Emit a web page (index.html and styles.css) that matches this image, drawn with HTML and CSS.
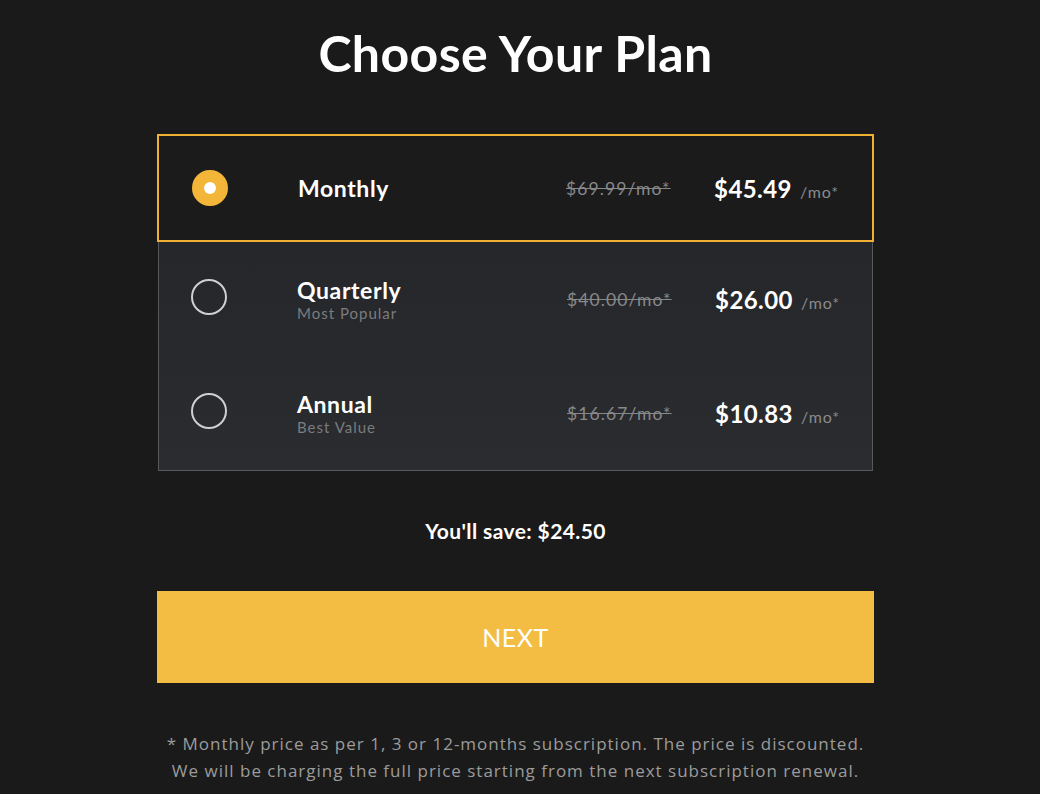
FILE: index.html
```html
<!DOCTYPE html>
<html lang="en">
<head>
    <meta charset="UTF-8">
    <meta name="viewport" content="width=device-width, initial-scale=1.0">
    <title>Choose Your Plan</title>
    <link rel="stylesheet" href="styles.css">
</head>
<body>

    <div class="page">
        <h1>Choose Your Plan</h1>

        <div class="plans">
            <label class="plan selected">
                <span class="radio"></span>
                <span class="plan-name">Monthly</span>
                <span class="old-price">$69.99/mo*</span>
                <span class="price">$45.49 <small>/mo*</small></span>
            </label>

            <label class="plan">
                <span class="radio"></span>
                <span class="plan-name">Quarterly<em>Most Popular</em></span>
                <span class="old-price">$40.00/mo*</span>
                <span class="price">$26.00 <small>/mo*</small></span>
            </label>

            <label class="plan">
                <span class="radio"></span>
                <span class="plan-name">Annual<em>Best Value</em></span>
                <span class="old-price">$16.67/mo*</span>
                <span class="price">$10.83 <small>/mo*</small></span>
            </label>
        </div>

        <p class="save">You'll save: $24.50</p>

        <button class="next-btn">NEXT</button>

        <p class="note">* Monthly price as per 1, 3 or 12-months subscription. The price is discounted.<br>
        We will be charging the full price starting from the next subscription renewal.</p>
    </div>

</body>
</html>
```

FILE: styles.css
```css
body {
    margin: 0;
    background: #1a1a1a;
    color: #fff;
    font-family: 'Lato', sans-serif;
}
.page {
    width: 717px;
    margin-left: 157px;
    padding-top: 22px;
}
h1 {
    margin: 0;
    text-align: center;
    font-size: 50px;
    font-weight: 700;
    line-height: 62px;
    letter-spacing: 0.4px;
}
.plans {
    margin-top: 50px;
    background: linear-gradient(180deg, #232427, #2a2c30);
    border: 1px solid #58595c;
    border-top: none;
    margin-left: 1px;
    margin-right: 1px;
}
.plan {
    display: flex;
    align-items: center;
    height: 114px;
    padding: 0 32px;
    box-sizing: border-box;
    cursor: pointer;
}
.plan.selected {
    height: 108px;
    background: #1b1b1b;
    border: 2px solid #f0b132;
    margin: 0 -2px;
    padding: 0 33px;
}
.radio {
    width: 32px;
    height: 32px;
    border: 2px solid #cfcfcf;
    border-radius: 50%;
    flex-shrink: 0;
    margin-top: -4px;
}
.selected .radio {
    background: #f3b638;
    border-color: #f3b638;
    position: relative;
    margin-top: 0;
}
.selected .radio::after {
    content: '';
    position: absolute;
    left: 10px;
    top: 10px;
    width: 12px;
    height: 12px;
    border-radius: 50%;
    background: #fff;
}
.plan-name {
    flex: 1;
    margin-left: 70px;
    font-size: 23px;
    font-weight: 700;
    letter-spacing: 0.6px;
    line-height: 28px;
}
.plan-name em {
    display: block;
    font-style: normal;
    font-weight: 400;
    font-size: 15px;
    line-height: 18px;
    color: #7b7c7f;
    letter-spacing: 1px;
}
.old-price {
    width: 110px;
    font-size: 17.5px;
    color: #87888a;
    text-decoration: line-through;
    letter-spacing: 1.1px;
}
.price {
    width: 133px;
    margin-left: 30px;
    text-align: right;
    font-size: 24px;
    font-weight: 700;
    letter-spacing: 0.4px;
}
.price small {
    font-size: 16px;
    font-weight: 400;
    color: #8a8b8d;
    margin-left: 2px;
    letter-spacing: 0.9px;
}
.save {
    margin: 48px 0 0;
    text-align: center;
    font-size: 21px;
    font-weight: 700;
    line-height: 24px;
    letter-spacing: 0.4px;
}
.next-btn {
    display: block;
    width: 100%;
    height: 92px;
    margin-top: 48px;
    border: none;
    background: #f2bd42;
    color: #fff;
    font-family: 'Lato', sans-serif;
    font-size: 25px;
    font-weight: 400;
    letter-spacing: 0.5px;
    cursor: pointer;
}
.note {
    margin: 47px 0 0;
    text-align: center;
    font-family: 'Open Sans', sans-serif;
    font-size: 17px;
    line-height: 27px;
    color: #9c9c9c;
    letter-spacing: 1px;
}
```
